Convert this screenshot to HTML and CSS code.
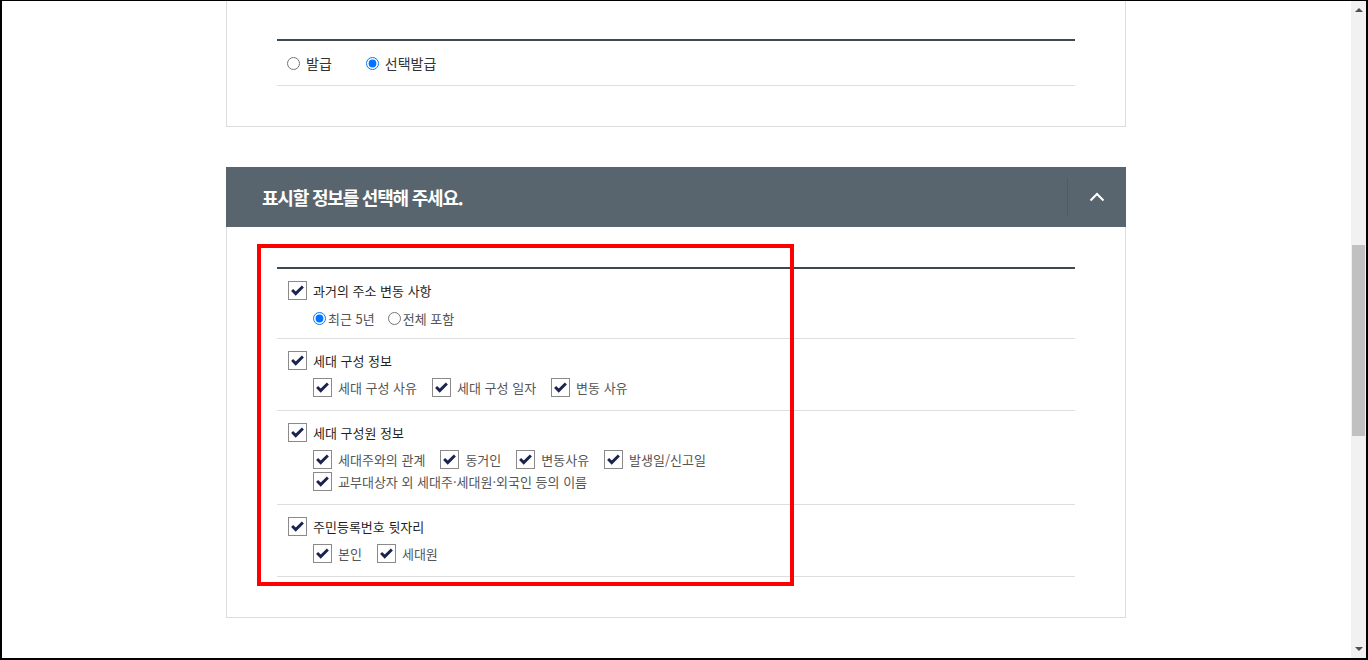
FILE: index.html
```html
<!DOCTYPE html>
<html lang="ko">
<head>
  <meta charset="UTF-8" />
  <title>주민등록표 등본 교부 - 표시할 정보 선택</title>
  <link rel="stylesheet" href="styles.css">
</head>
<body>
  <div class="screen">
    <main class="page">
      <section class="panel panel-top">
        <div class="issue-type">
          <label class="radio"><input type="radio" name="issue"><span>발급</span></label>
          <label class="radio"><input type="radio" name="issue" checked><span>선택발급</span></label>
        </div>
      </section>

      <section class="group">
        <div class="group-head">
          <h2>표시할 정보를 선택해 주세요.</h2>
          <button class="fold" type="button" aria-label="접기">
            <svg width="16" height="10" viewBox="0 0 16 10"><polyline points="1.5,8.5 8,2 14.5,8.5" /></svg>
          </button>
        </div>
        <div class="panel group-body">
          <ul class="opts">
            <li class="opt opt-period">
              <label class="check main">
                <span class="box"><svg viewBox="0 0 19 19"><path d="M3.5 9l4 4 8-8" /></svg></span>과거의 주소 변동 사항
              </label>
              <div class="subs radios">
                <label class="radio small"><input type="radio" name="past" checked><span>최근 5년</span></label>
                <label class="radio small"><input type="radio" name="past"><span>전체 포함</span></label>
              </div>
            </li>
            <li class="opt">
              <label class="check main">
                <span class="box"><svg viewBox="0 0 19 19"><path d="M3.5 9l4 4 8-8" /></svg></span>세대 구성 정보
              </label>
              <div class="subs">
                <label class="check"><span class="box"><svg viewBox="0 0 19 19"><path d="M3.5 9l4 4 8-8" /></svg></span>세대 구성 사유</label>
                <label class="check"><span class="box"><svg viewBox="0 0 19 19"><path d="M3.5 9l4 4 8-8" /></svg></span>세대 구성 일자</label>
                <label class="check"><span class="box"><svg viewBox="0 0 19 19"><path d="M3.5 9l4 4 8-8" /></svg></span>변동 사유</label>
              </div>
            </li>
            <li class="opt">
              <label class="check main">
                <span class="box"><svg viewBox="0 0 19 19"><path d="M3.5 9l4 4 8-8" /></svg></span>세대 구성원 정보
              </label>
              <div class="subs">
                <label class="check"><span class="box"><svg viewBox="0 0 19 19"><path d="M3.5 9l4 4 8-8" /></svg></span>세대주와의 관계</label>
                <label class="check"><span class="box"><svg viewBox="0 0 19 19"><path d="M3.5 9l4 4 8-8" /></svg></span>동거인</label>
                <label class="check"><span class="box"><svg viewBox="0 0 19 19"><path d="M3.5 9l4 4 8-8" /></svg></span>변동사유</label>
                <label class="check"><span class="box"><svg viewBox="0 0 19 19"><path d="M3.5 9l4 4 8-8" /></svg></span>발생일/신고일</label>
              </div>
              <div class="subs next">
                <label class="check"><span class="box"><svg viewBox="0 0 19 19"><path d="M3.5 9l4 4 8-8" /></svg></span>교부대상자 외 세대주·세대원·외국인 등의 이름</label>
              </div>
            </li>
            <li class="opt">
              <label class="check main">
                <span class="box"><svg viewBox="0 0 19 19"><path d="M3.5 9l4 4 8-8" /></svg></span>주민등록번호 뒷자리
              </label>
              <div class="subs">
                <label class="check"><span class="box"><svg viewBox="0 0 19 19"><path d="M3.5 9l4 4 8-8" /></svg></span>본인</label>
                <label class="check"><span class="box"><svg viewBox="0 0 19 19"><path d="M3.5 9l4 4 8-8" /></svg></span>세대원</label>
              </div>
            </li>
          </ul>
          <div class="mark"></div>
        </div>
      </section>

      <section class="group">
        <div class="group-head"></div>
      </section>
    </main>

    <div class="scrollbar">
      <div class="arrow up"></div>
      <div class="thumb"></div>
      <div class="arrow down"></div>
    </div>
  </div>
</body>
</html>
```

FILE: styles.css
```css
* { box-sizing: border-box; }
body {
  margin: 0;
  font-family: "Noto Sans CJK KR", "Noto Sans", sans-serif;
  color: #222;
  background: #fff;
}
.screen {
  height: 660px;
  display: flex;
  overflow: hidden;
  border: solid #000;
  border-width: 1px 2px 2px 2px;
}
.page {
  flex: 1;
  display: flex;
  flex-direction: column;
  align-items: center;
  padding-right: 1px;
}

/* panels */
.panel {
  width: 900px;
  border: 1px solid #dcdcdc;
  border-top: 0;
}
.panel-top {
  padding: 38px 50px 40px;
}
.issue-type {
  height: 47px;
  display: flex;
  align-items: center;
  gap: 34px;
  padding-left: 10px;
  border-top: 2px solid #3d4852;
  border-bottom: 1px solid #dedede;
}
.radio {
  display: flex;
  align-items: center;
  gap: 6px;
  font-size: 14px;
  color: #333;
}
.radio input {
  width: 13px;
  height: 13px;
  margin: 0;
}
.radio.small {
  gap: 2px;
  font-size: 13px;
  color: #555;
}

.group {
  margin-top: 40px;
  width: 900px;
}
.group-head {
  height: 60px;
  display: flex;
  align-items: center;
  background: #59656e;
}
.group-head h2 {
  flex: 1;
  margin: 0;
  padding-left: 36px;
  font-size: 18px;
  font-weight: 700;
  letter-spacing: -1.2px;
  color: #fff;
}
.fold {
  width: 59px;
  height: 38px;
  padding: 0;
  border: 0;
  border-left: 1px solid #4f5a63;
  background: none;
  display: flex;
  align-items: center;
  justify-content: center;
}
.fold svg {
  fill: none;
  stroke: #fff;
  stroke-width: 2;
}
.group-body {
  position: relative;
  padding: 40px 50px 40px;
}

/* option list */
.opts {
  list-style: none;
  margin: 0;
  padding: 0;
  border-top: 2px solid #3d4852;
}
.opt {
  padding: 11px 11px 13px;
  border-bottom: 1px solid #dedede;
}
.opt-period {
  padding-bottom: 10px;
}
.check {
  display: flex;
  align-items: center;
  gap: 6px;
  height: 20px;
  font-size: 13px;
  color: #555;
  white-space: nowrap;
}
.check.main {
  color: #1f1f1f;
}
.box {
  width: 19px;
  height: 19px;
  border: 1px solid #8a8a8a;
  background: #fff;
  display: flex;
}
.box svg {
  width: 17px;
  height: 17px;
  fill: none;
  stroke: #1b2351;
  stroke-width: 3.2;
}
.subs {
  display: flex;
  gap: 15px;
  margin: 7px 0 0 25px;
}
.subs.radios {
  height: 20px;
  margin-top: 8px;
  gap: 13px;
}
.subs.next {
  margin-top: 2px;
}

/* annotation */
.mark {
  position: absolute;
  top: 17px;
  left: 30px;
  width: 537px;
  height: 342px;
  border: 4px solid #f00;
}

/* window scrollbar */
.scrollbar {
  width: 15px;
  display: flex;
  flex-direction: column;
  align-items: center;
  background: #f1f1f1;
}
.arrow {
  width: 0;
  height: 0;
  margin: 7px 0;
  border-left: 4px solid transparent;
  border-right: 4px solid transparent;
}
.arrow.up { border-bottom: 4px solid #505050; }
.arrow.down {
  margin-top: auto;
  border-top: 4px solid #505050;
}
.thumb {
  width: 13px;
  height: 191px;
  margin-top: 226px;
  background: #c1c1c1;
}
```
